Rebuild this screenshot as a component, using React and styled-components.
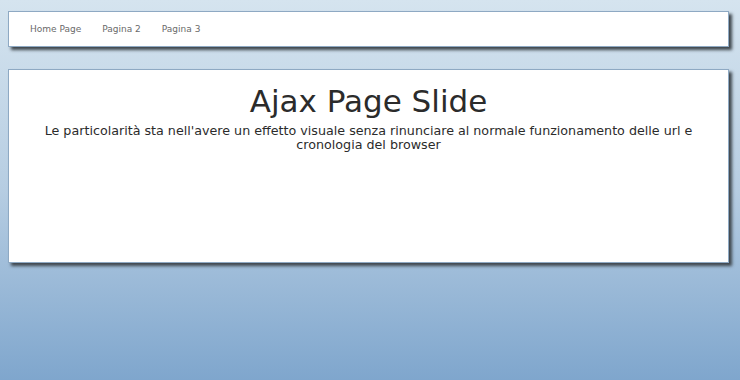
import React from "react";
import styled, { createGlobalStyle } from "styled-components";

const GlobalStyle = createGlobalStyle`
  html, body {
    margin: 0;
    padding: 0;
    height: 100%;
  }
  body {
    background: linear-gradient(to bottom, #d5e4ef 0%, #b6cde2 50%, #7fa6cd 100%);
    font-family: "DejaVu Sans", Verdana, sans-serif;
    min-height: 380px;
  }
`;

const Page = styled.div`
  padding: 11px 11px 0 8px;
  display: flex;
  flex-direction: column;
  gap: 22px;
`;

const Box = styled.div`
  background: #fff;
  border: 1px solid #8ea9c3;
  box-shadow: 3px 3px 3px #3f474d;
`;

const Nav = styled(Box)`
  height: 34px;
  display: flex;
  align-items: center;
  padding-left: 21px;
  gap: 21px;
`;

const NavLink = styled.a`
  font-size: 9px;
  color: #6a6a6a;
  text-decoration: none;
  cursor: pointer;
`;

const Main = styled(Box)`
  height: 192px;
  text-align: center;
  color: #2b2b2b;
`;

const Title = styled.h1`
  margin: 12px 0 0;
  font-weight: normal;
  font-size: 31px;
  line-height: 38px;
`;

const Subtitle = styled.p`
  margin: 4px 30px 0;
  font-size: 12.7px;
  line-height: 14px;
`;

export default function App() {
  return (
    <>
      <GlobalStyle />
      <Page>
        <Nav>
          <NavLink>Home Page</NavLink>
          <NavLink>Pagina 2</NavLink>
          <NavLink>Pagina 3</NavLink>
        </Nav>
        <Main>
          <Title>Ajax Page Slide</Title>
          <Subtitle>
            Le particolarità sta nell'avere un effetto visuale senza rinunciare
            al normale funzionamento delle url e cronologia del browser
          </Subtitle>
        </Main>
      </Page>
    </>
  );
}
